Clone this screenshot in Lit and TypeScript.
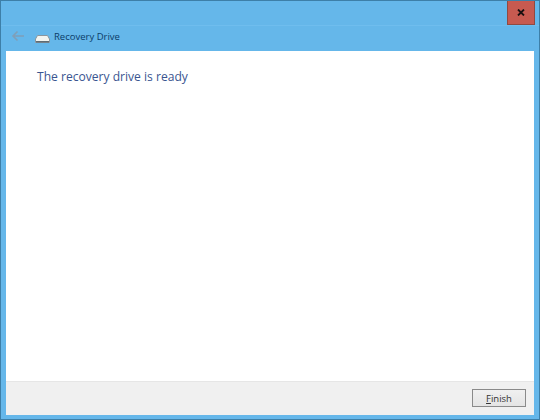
import { LitElement, html, css } from "lit";
import { customElement } from "lit/decorators.js";

@customElement("app-root")
export class AppRoot extends LitElement {
  static styles = css`
    :host { display: block; width: 540px; height: 420px; font-family: "Open Sans", "Noto Sans", sans-serif; }
    .window { box-sizing: border-box; width: 540px; height: 420px; display: flex; flex-direction: column; background: #65b7ea; border: 1px solid #3d7fa8; }
    .top { height: 24px; display: flex; justify-content: flex-end; padding-right: 4px; flex: none; }
    .close { width: 28px; height: 24px; background: #c75a50; border: 1px solid #8f4a42; border-top: none; box-sizing: border-box; display: flex; align-items: center; justify-content: center; padding-bottom: 1px; }
    .nav { height: 26px; flex: none; display: flex; align-items: center; padding: 0 0 4px 10px; border-top: 1px solid #6fbdee; box-sizing: border-box; }
    .back { width: 14px; height: 12px; margin-right: 10px; margin-top: -1px; }
    .drive { width: 15px; height: 8px; margin-right: 4px; margin-top: 5px; }
    .title { font-size: 9.5px; color: #0b3c68; }
    .client { flex: 1; margin: 0 5px 0 5px; background: #fff; display: flex; flex-direction: column; min-height: 0; }
    .body { flex: 1; padding: 18px 31px; }
    h1 { margin: 0; font-weight: 400; font-size: 12.08px; line-height: 16px; color: #3a5590; }
    .footer { height: 34px; flex: none; background: #f0f0f0; border-top: 1px solid #e6e6e6; display: flex; align-items: center; justify-content: flex-end; padding: 0 8px 1px 0; box-sizing: border-box; }
    button { width: 54px; height: 18px; padding: 0; background: linear-gradient(#f0f0f0, #e4e4e4); border: 1px solid #8a8a8a; font: inherit; font-size: 9.5px; color: #333; }
    u { text-underline-offset: 1px; }
    .bottom { height: 4px; flex: none; }
  `;

  render() {
    return html`
      <div class="window">
        <div class="top">
          <div class="close">
            <svg width="8" height="7" viewBox="0 0 8 7"><path d="M1 .5 7 6.5M7 .5 1 6.5" stroke="#1a1010" stroke-width="1.8" /></svg>
          </div>
        </div>
        <div class="nav">
          <svg class="back" viewBox="0 0 14 12"><path d="M13 6H2M6.500 1.500 2 6l4.500 4.500" fill="none" stroke="#7f9fb8" stroke-width="1.6" /></svg>
          <svg class="drive" viewBox="0 0 15 8">
            <path d="M2.500 .5h10L14.500 4v3.500H.5V4z" fill="#f2f4f0" stroke="#8a969e" />
            <path d="M1 6h13v1.500H1z" fill="#5f6b73" />
          </svg>
          <span class="title">Recovery Drive</span>
        </div>
        <div class="client">
          <div class="body"><h1>The recovery drive is ready</h1></div>
          <div class="footer"><button><u>F</u>inish</button></div>
        </div>
        <div class="bottom"></div>
      </div>
    `;
  }
}
